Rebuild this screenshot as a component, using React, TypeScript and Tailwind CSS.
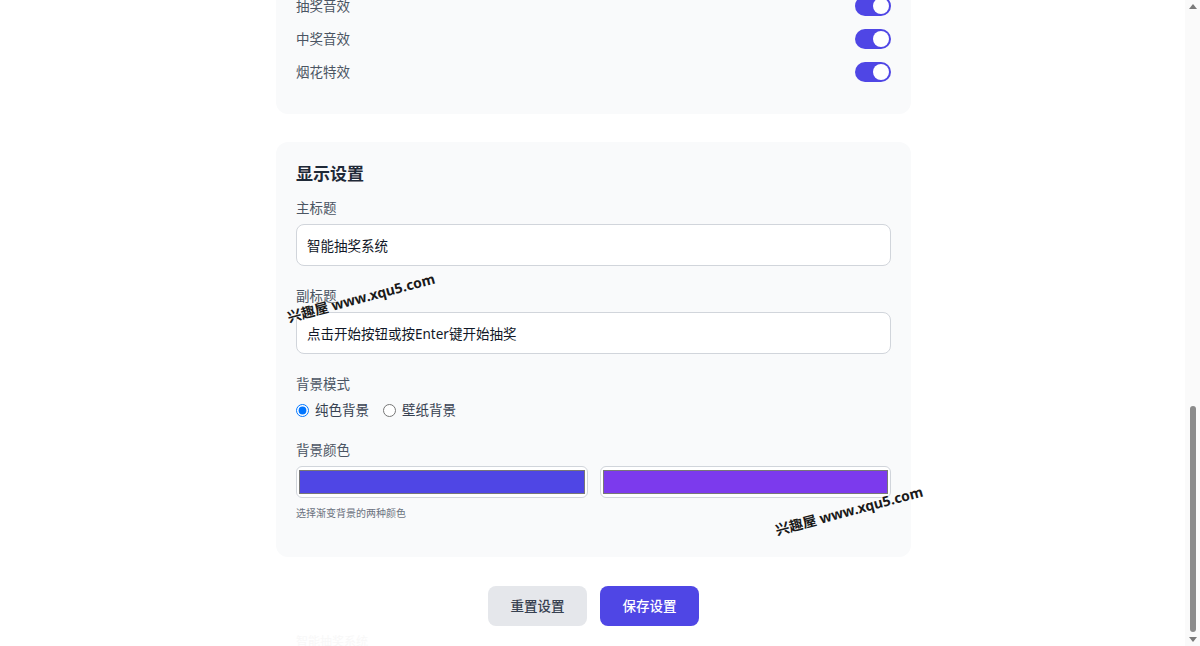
import { useLayoutEffect, useRef } from "react";

function Toggle() {
  return (
    <span className="flex h-5 w-9 shrink-0 items-center justify-end rounded-full bg-[#4f46e5] px-0.5">
      <span className="h-4 w-4 rounded-full bg-white" />
    </span>
  );
}

function ToggleRow({ label }: { label: string }) {
  return (
    <div className="flex h-5 items-center justify-between">
      <span className="text-[13.5px] leading-5 text-[#4b5563]">{label}</span>
      <Toggle />
    </div>
  );
}

function Field({ label, value, last }: { label: string; value: string; last?: boolean }) {
  return (
    <div className={last ? "" : "mb-5"}>
      <label className="mb-1.5 block text-[13.5px] leading-5 text-[#4b5563]">{label}</label>
      <input
        readOnly
        value={value}
        className="block h-[42px] w-full rounded-lg border border-[#d1d5db] bg-white px-2.5 text-[13.5px] text-[#111827] outline-none"
      />
    </div>
  );
}

function CardTitle({ children }: { children: string }) {
  return <h2 className="mb-3 text-[17px] font-bold leading-6 text-[#1f2937]">{children}</h2>;
}

function Arrow({ up }: { up?: boolean }) {
  return (
    <svg width="8" height="5" viewBox="0 0 8 5" className="block">
      {up ? <polygon points="4,0 8,5 0,5" fill="#7a7a7a" /> : <polygon points="0,0 8,0 4,5" fill="#7a7a7a" />}
    </svg>
  );
}

export default function App() {
  const scroller = useRef<HTMLDivElement>(null);
  const card = useRef<HTMLDivElement>(null);

  useLayoutEffect(() => {
    const s = scroller.current;
    const c = card.current;
    if (!s || !c) return;
    const off = c.getBoundingClientRect().top - s.getBoundingClientRect().top + s.scrollTop;
    s.scrollTop = off - 142;
  }, []);

  return (
    <div className="relative flex h-[646px] w-[1200px] overflow-hidden bg-white font-['Noto_Sans','Noto_Sans_CJK_SC',sans-serif]">
      <div ref={scroller} className="h-full w-[1185px] shrink-0 overflow-hidden">
        <div className="ml-[276px] w-[635px] pt-10">
          <div className="mb-8 text-center">
            <h1 className="text-3xl font-bold leading-9 text-[#1f2937]">系统设置</h1>
            <p className="mt-2 text-sm leading-5 text-[#6b7280]">自定义抽奖系统的各项参数</p>
          </div>

          <div className="flex flex-col gap-7">
            <section className="rounded-xl bg-[#f9fafb] p-5">
              <CardTitle>抽奖设置</CardTitle>
              <Field label="活动名称" value="年会抽奖" />
              <Field label="抽奖总人数" value="100" />
              <Field label="每轮抽取人数" value="1" />
              <Field label="滚动速度 (毫秒)" value="50" />
              <Field label="抽奖时长 (秒)" value="3" />
              <Field label="奖项名称" value="一等奖" />
              <div className="mb-4">
                <label className="mb-1.5 block text-[13.5px] leading-5 text-[#4b5563]">抽奖名单</label>
                <textarea
                  readOnly
                  value={"张三\n李四\n王五\n赵六"}
                  className="block h-[160px] w-full resize-none rounded-lg border border-[#d1d5db] bg-white px-2.5 py-2 text-[13.5px] text-[#1f2937] outline-none"
                />
              </div>
            </section>

            <section className="rounded-xl bg-[#f9fafb] p-5">
              <CardTitle>音效设置</CardTitle>
              <div className="mb-3 flex flex-col gap-[13px]">
                <ToggleRow label="背景音乐" />
                <ToggleRow label="按键音效" />
                <ToggleRow label="抽奖音效" />
                <ToggleRow label="中奖音效" />
                <ToggleRow label="烟花特效" />
              </div>
            </section>

            <section ref={card} className="rounded-xl bg-[#f9fafb] p-5">
              <CardTitle>显示设置</CardTitle>
              <Field label="主标题" value="智能抽奖系统" />
              <Field label="副标题" value="点击开始按钮或按Enter键开始抽奖" />

              <div className="mb-5">
                <div className="mb-1.5 text-[13.5px] leading-5 text-[#4b5563]">背景模式</div>
                <div className="flex h-5 items-center gap-3.5 text-[13.5px] text-[#374151]">
                  <label className="flex items-center gap-1.5">
                    <input type="radio" name="bg" defaultChecked className="h-[13px] w-[13px]" />
                    <span>纯色背景</span>
                  </label>
                  <label className="flex items-center gap-1.5">
                    <input type="radio" name="bg" className="h-[13px] w-[13px]" />
                    <span>壁纸背景</span>
                  </label>
                </div>
              </div>

              <div className="mb-4">
                <div className="mb-1.5 text-[13.5px] leading-5 text-[#4b5563]">背景颜色</div>
                <div className="grid grid-cols-2 gap-3">
                  <input
                    type="color"
                    defaultValue="#4f46e5"
                    className="block h-8 w-full cursor-pointer rounded-md border border-[#d1d5db] bg-white [&::-webkit-color-swatch-wrapper]:px-[2px] [&::-webkit-color-swatch-wrapper]:py-[3px]"
                  />
                  <input
                    type="color"
                    defaultValue="#7c3aed"
                    className="block h-8 w-full cursor-pointer rounded-md border border-[#d1d5db] bg-white [&::-webkit-color-swatch-wrapper]:px-[2px] [&::-webkit-color-swatch-wrapper]:py-[3px]"
                  />
                </div>
                <p className="mt-[7px] text-[10px] leading-4 text-[#6b7280]">选择渐变背景的两种颜色</p>
              </div>
            </section>
          </div>

          <div className="mt-[29px] flex justify-center gap-[13px]">
            <button className="h-10 w-[99px] rounded-lg bg-[#e5e7eb] text-[13.5px] font-medium text-[#374151]">重置设置</button>
            <button className="h-10 w-[99px] rounded-lg bg-[#4f46e5] text-[13.5px] font-medium text-white">保存设置</button>
          </div>

          <div className="mt-2 px-5 pb-1 text-xs leading-4 text-[#f8f8f8]">智能抽奖系统</div>
        </div>
      </div>

      <div className="flex h-full w-[15px] shrink-0 flex-col items-center bg-[#fafafa]">
        <div className="flex h-3 items-center justify-center pt-[1px]">
          <Arrow up />
        </div>
        <div className="flex flex-1 flex-col items-center justify-end pb-[2px]">
          <div className="h-[226px] w-[6px] rounded-full bg-[#8b8b8b]" />
        </div>
        <div className="flex h-3 items-center justify-center pb-[1px]">
          <Arrow />
        </div>
      </div>

      <div className="pointer-events-none absolute left-[285px] top-[288px] -rotate-[15deg] whitespace-nowrap text-[14px] font-bold leading-5 text-[#1a1a1a] [text-shadow:0_0_2px_#fff,0_0_2px_#fff]">
        兴趣屋 www.xqu5.com
      </div>
      <div className="pointer-events-none absolute left-[773px] top-[501px] -rotate-[15deg] whitespace-nowrap text-[14px] font-bold leading-5 text-[#1a1a1a] [text-shadow:0_0_2px_#fff,0_0_2px_#fff]">
        兴趣屋 www.xqu5.com
      </div>
    </div>
  );
}
